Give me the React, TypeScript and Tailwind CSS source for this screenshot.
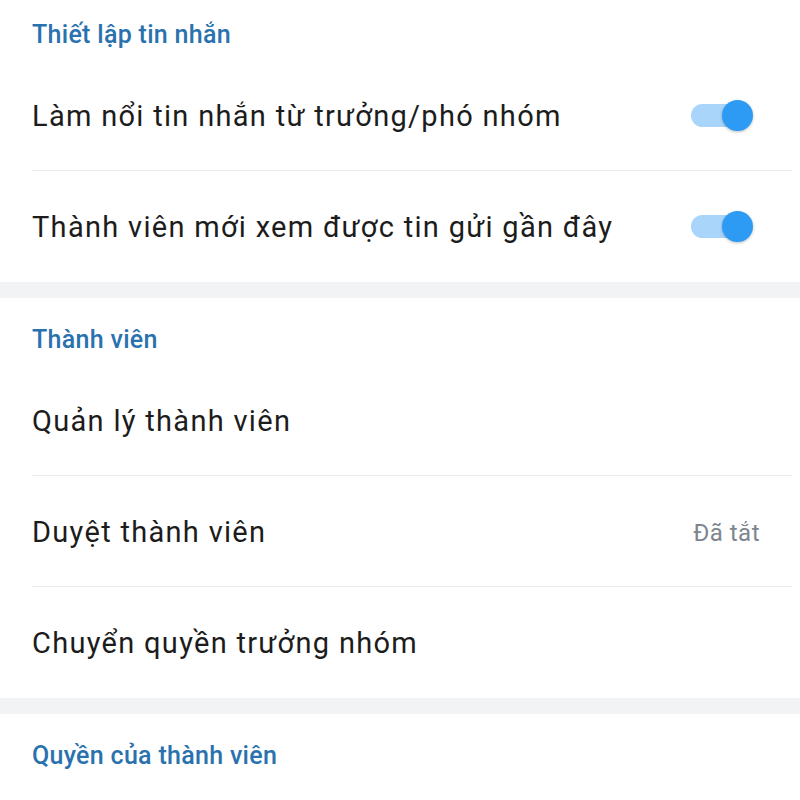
const Toggle = () => (
  <div className="relative w-[62px] h-[32px] mr-[7px] flex items-center">
    <div className="absolute left-0 w-[54px] h-[23px] rounded-full bg-[#a9d5fb]" />
    <div className="absolute right-0 w-[31px] h-[31px] rounded-full bg-[#2d9bf4] shadow-[0_1px_3px_rgba(0,0,0,0.25)]" />
  </div>
);

const Header = ({ title, first }: any) => (
  <div
    className={`px-[32px] ${first ? "pt-[21px]" : "pt-[28px]"} pb-[11px] text-[25px] leading-[28px] tracking-[0.3px] font-medium text-[#2a72ae]`}
  >
    {title}
  </div>
);

const Row = ({ label, right, last }: any) => (
  <div
    className={`ml-[32px] mr-[8px] h-[111px] flex items-center justify-between pr-[32px] ${
      last ? "" : "border-b border-[#e8e9eb]"
    }`}
  >
    <span className="text-[29px] tracking-[1.3px] text-[#1c1c1c] pt-[3px]">{label}</span>
    {right}
  </div>
);

const Gap = () => <div className="h-[16px] bg-[#f2f3f5]" />;

export default function App() {
  return (
    <div
      className="w-[800px] h-[800px] overflow-hidden bg-white"
      style={{ fontFamily: "Roboto, 'Noto Sans', sans-serif" }}
    >
      <Header title="Thiết lập tin nhắn" first />
      <Row label="Làm nổi tin nhắn từ trưởng/phó nhóm" right={<Toggle />} />
      <Row
        label="Thành viên mới xem được tin gửi gần đây"
        right={<Toggle />}
        last
      />
      <Gap />
      <Header title="Thành viên" />
      <Row label="Quản lý thành viên" />
      <Row
        label="Duyệt thành viên"
        right={
          <span className="text-[24px] tracking-[0.5px] text-[#7d858e] pt-[3px]">
            Đã tắt
          </span>
        }
      />
      <Row label="Chuyển quyền trưởng nhóm" last />
      <Gap />
      <Header title="Quyền của thành viên" />
    </div>
  );
}
